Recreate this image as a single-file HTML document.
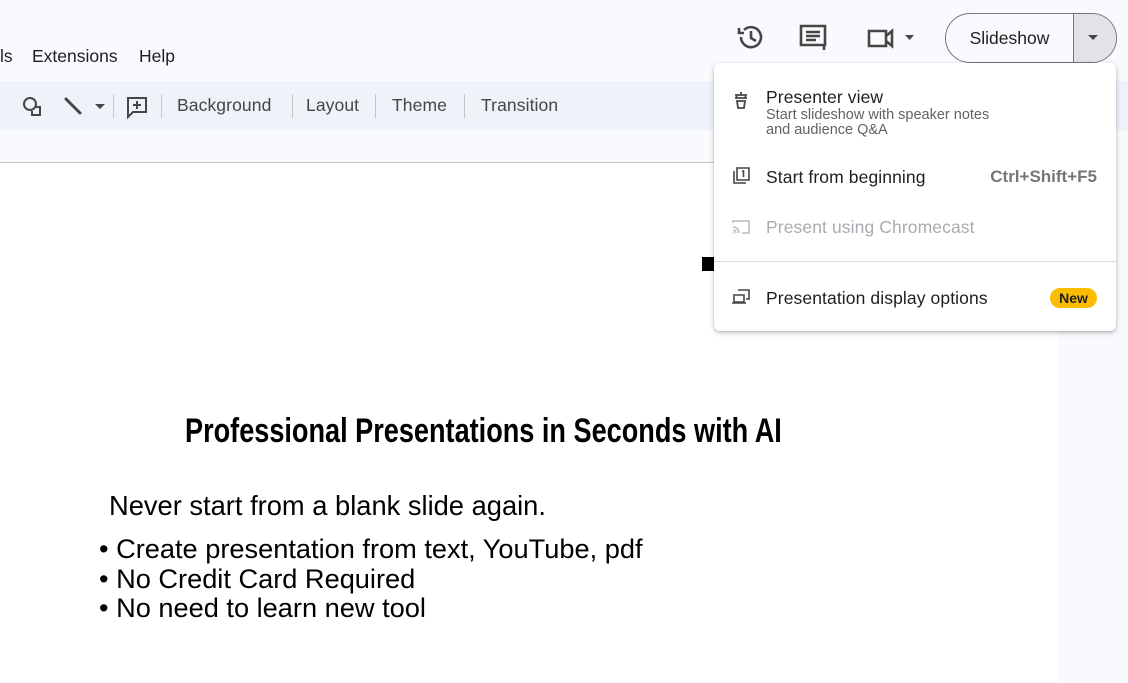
<!DOCTYPE html>
<html><head><style>
*{margin:0;padding:0;box-sizing:border-box}
body{width:1128px;height:683px;overflow:hidden;background:#f8fafd;font-family:"Liberation Sans",Roboto,sans-serif;position:relative;color:#1f1f1f}
.a{position:absolute}
.menu{font-size:17.5px;top:46px}
.tb{top:81px;left:0;width:1128px;height:49px;background:#eef2f9}
.tbt{font-size:17.5px;color:#444746;top:95px;letter-spacing:.1px}
.sep{top:94px;width:1px;height:24px;background:#c4c7c5}
.slide{top:162px;left:0;width:1058px;height:521px;background:#fff;border-top:1px solid #c4c7c5}
.pop{left:714px;top:63px;width:402px;height:268px;background:#fff;border-radius:6px;box-shadow:0 2px 6px rgba(0,0,0,.2),0 1px 2px rgba(0,0,0,.15)}
.mi{font-size:17.5px;color:#1f1f1f;letter-spacing:.1px}
</style></head><body>
<div class="a menu" style="left:0">ls</div>
<div class="a menu" style="left:32px">Extensions</div>
<div class="a menu" style="left:139px">Help</div>

<div class="a tb"></div>
<svg class="a" style="left:20px;top:94px" width="26" height="26" viewBox="0 0 26 26" fill="none" stroke="#444746" stroke-width="2"><circle cx="10" cy="10" r="6"/><path d="M16 13h4v8h-8v-4"/></svg>
<svg class="a" style="left:60px;top:94px" width="50" height="26" viewBox="0 0 50 26"><path d="M6 5l14 14" stroke="#444746" stroke-width="3" stroke-linecap="round"/><path d="M35 10h10l-5 5z" fill="#444746"/></svg>
<div class="a sep" style="left:113px"></div>
<svg class="a" style="left:124px;top:94px" width="26" height="26" viewBox="0 0 26 26" fill="none" stroke="#444746" stroke-width="2"><path d="M4 4h18v14H9l-5 5z"/><path d="M13 7v8M9 11h8"/></svg>
<div class="a sep" style="left:161px"></div>
<div class="a tbt" style="left:177px">Background</div>
<div class="a sep" style="left:292px"></div>
<div class="a tbt" style="left:306px">Layout</div>
<div class="a sep" style="left:375px"></div>
<div class="a tbt" style="left:392px">Theme</div>
<div class="a sep" style="left:464px"></div>
<div class="a tbt" style="left:481px">Transition</div>

<div class="a slide"></div>
<div class="a" style="left:1058px;top:163px;width:70px;height:520px;background:#f8fafd"></div>
<div class="a" style="left:702px;top:257px;width:12px;height:14px;background:#000"></div>
<div class="a" style="left:185px;top:412px;font-family:'Liberation Sans Narrow','Liberation Sans',sans-serif;font-weight:bold;font-size:34px;transform:scaleX(.797);transform-origin:left;color:#000;white-space:nowrap">Professional Presentations in Seconds with AI</div>
<div class="a" style="left:109px;top:490px;font-size:27.3px;color:#000;white-space:nowrap">Never start from a blank slide again.</div>
<div class="a" style="left:99px;top:534px;font-size:27.2px;line-height:29.5px;color:#000;white-space:nowrap">• Create presentation from text, YouTube, pdf<br>• No Credit Card Required<br>• No need to learn new tool</div>

<svg class="a" style="left:736px;top:22px" width="30" height="30" viewBox="0 0 30 30" fill="none" stroke="#444746" stroke-width="2.6"><path d="M5 15a10 10 0 1 0 3-7"/><path d="M3 6v5h5" /><path d="M15 9v7l5 3"/></svg>
<svg class="a" style="left:799px;top:24px" width="30" height="28" viewBox="0 0 30 28" fill="none" stroke="#444746" stroke-width="2.6"><path d="M2 2h24v19H2z"/><path d="M7 8h14M7 12h14M7 16h10"/><path d="M25 21v5" /></svg>
<svg class="a" style="left:866px;top:26px" width="52" height="24" viewBox="0 0 52 24" fill="none" stroke="#444746" stroke-width="2.6"><path d="M3 5h17v15H3z"/><path d="M20 10l6-5v15l-6-5"/><path d="M39 9h9l-4.5 5z" fill="#444746" stroke="none"/></svg>
<div class="a" style="left:945px;top:13px;width:172px;height:50px;border:1px solid #747775;border-radius:25px;overflow:hidden;background:#f8fafd">
<div class="a" style="left:0;top:0;width:127px;height:48px;font-size:17.5px;line-height:48px;text-align:center;color:#1f1f1f">Slideshow</div>
<div class="a" style="left:127px;top:0;width:45px;height:48px;background:#e1e3e6;border-left:1px solid #747775"></div>
<svg class="a" style="left:140px;top:20px" width="14" height="8"><path d="M2 1h10l-5 5z" fill="#444746"/></svg>
</div>

<div class="a pop">
<svg class="a" style="left:18px;top:28px" width="20" height="20" viewBox="0 0 20 20" fill="none" stroke="#444746" stroke-width="1.8"><path d="M9 1v3M3 7h12M5 7l-1-3h10l-1 3M5 10h8l-1 7H6z"/></svg>
<div class="a mi" style="left:52px;top:24px">Presenter view</div>
<div class="a" style="left:52px;top:45px;font-size:14.5px;line-height:15px;color:#5f6368">Start slideshow with speaker notes<br>and audience Q&amp;A</div>
<svg class="a" style="left:17px;top:103px" width="20" height="20" viewBox="0 0 20 20" fill="none" stroke="#444746" stroke-width="1.6"><path d="M6 2h12v12H6z"/><path d="M3 5v12h12"/><path d="M11 5h1.5v6"/></svg>
<div class="a mi" style="left:52px;top:104px">Start from beginning</div>
<div class="a" style="right:19px;top:104px;font-size:17px;color:#747775;font-weight:bold">Ctrl+Shift+F5</div>
<svg class="a" style="left:17px;top:154px" width="20" height="20" viewBox="0 0 20 20" fill="none" stroke="#b9bcbf" stroke-width="1.6"><path d="M2 6V4h16v12h-7"/><path d="M2 10a6 6 0 0 1 6 6M2 13a3 3 0 0 1 3 3M2 16h1"/></svg>
<div class="a mi" style="left:52px;top:154px;color:#a8abaf">Present using Chromecast</div>
<div class="a" style="left:0;top:198px;width:402px;height:1px;background:#dadce0"></div>
<svg class="a" style="left:17px;top:225px" width="20" height="18" viewBox="0 0 20 18" fill="none" stroke="#444746" stroke-width="1.6"><path d="M7 2h11v9h-3"/><path d="M3 7h10v7H3zM1 15h14"/></svg>
<div class="a mi" style="left:52px;top:225px">Presentation display options</div>
<div class="a" style="left:336px;top:225px;width:47px;height:20px;border-radius:10px;background:#fbbc04;font-size:14px;line-height:20px;text-align:center;color:#1f1f1f;font-weight:bold">New</div>
</div>
</body></html>
